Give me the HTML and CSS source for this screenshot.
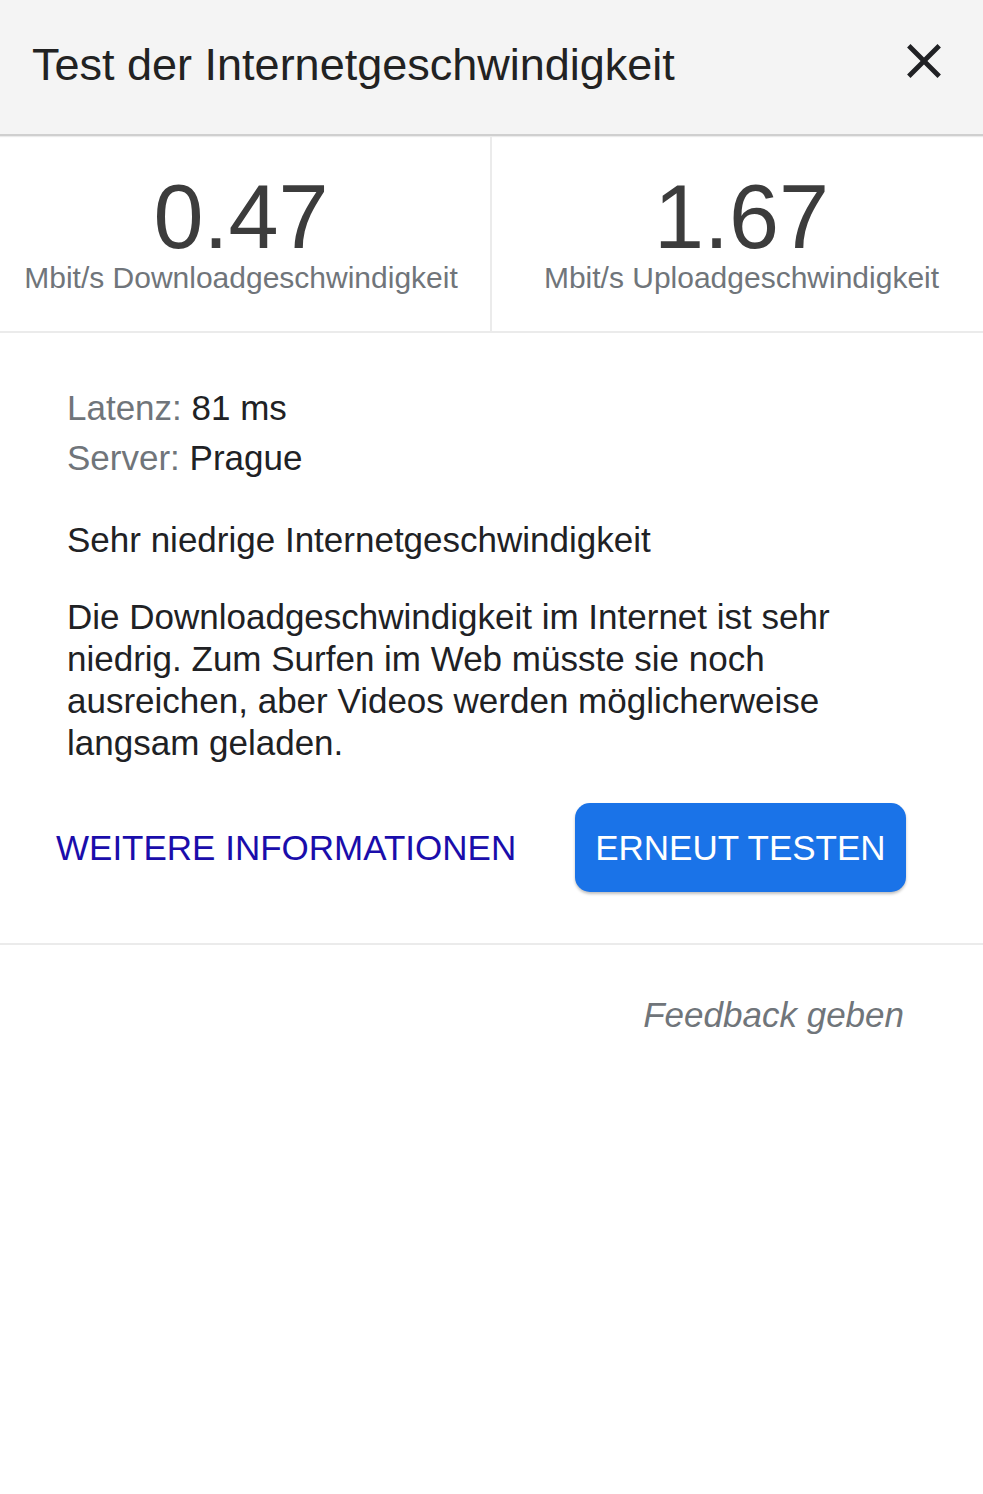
FILE: index.html
```html
<!DOCTYPE html>
<html lang="de">
<head>
<meta charset="utf-8">
<title>Test der Internetgeschwindigkeit</title>
<link rel="stylesheet" href="styles.css">
</head>
<body>
<div class="dialog">
  <header class="header">
    <h1 class="title">Test der Internetgeschwindigkeit</h1>
    <button class="close" aria-label="Schließen">
      <svg viewBox="0 0 24 24" width="58" height="58"><path d="M19 6.41L17.59 5 12 10.59 6.41 5 5 6.41 10.59 12 5 17.59 6.41 19 12 13.41 17.59 19 19 17.59 13.41 12z" fill="#202124"/></svg>
    </button>
  </header>
  <section class="stats">
    <div class="stat stat-down">
      <div class="stat-value">0.47</div>
      <div class="stat-label">Mbit/s Downloadgeschwindigkeit</div>
    </div>
    <div class="stat stat-up">
      <div class="stat-value">1.67</div>
      <div class="stat-label">Mbit/s Uploadgeschwindigkeit</div>
    </div>
  </section>
  <section class="details">
    <div class="meta"><span class="meta-key">Latenz:</span> 81 ms</div>
    <div class="meta"><span class="meta-key">Server:</span> Prague</div>
    <p class="verdict">Sehr niedrige Internetgeschwindigkeit</p>
    <p class="desc">Die Downloadgeschwindigkeit im Internet ist sehr niedrig. Zum Surfen im Web müsste sie noch ausreichen, aber Videos werden möglicherweise langsam geladen.</p>
    <div class="actions">
      <a class="more" href="#">WEITERE INFORMATIONEN</a>
      <button class="retry">ERNEUT TESTEN</button>
    </div>
  </section>
  <footer class="footer">
    <a class="feedback" href="#">Feedback geben</a>
  </footer>
</div>
</body>
</html>
```

FILE: styles.css
```css
html, body {
  margin: 0;
  padding: 0;
  background: #fff;
}
body {
  font-family: "Liberation Sans", Arial, sans-serif;
  color: #202124;
}
.header {
  height: 134px;
  background: #f4f4f4;
  border-bottom: 2px solid #cfcfcf;
  box-shadow: 0 1px 1px rgba(0,0,0,0.08);
  display: flex;
  align-items: flex-start;
  justify-content: space-between;
  box-sizing: content-box;
}
.title {
  margin: 0;
  padding: 39px 0 0 32px;
  font-size: 45px;
  line-height: 52px;
  font-weight: normal;
  color: #222;
}
.close {
  margin: 32px 30px 0 0;
  padding: 0;
  border: 0;
  background: none;
  width: 58px;
  height: 58px;
  display: flex;
}
.stats {
  display: flex;
  border-bottom: 2px solid #ebebeb;
}
.stat {
  flex: 0 0 auto;
  box-sizing: border-box;
  padding: 37px 0 36px;
  text-align: center;
}
.stat-down {
  width: 492px;
  padding-right: 8px;
  border-right: 2px solid #ebebeb;
}
.stat-up {
  width: 489px;
  padding-left: 10px;
}
.stat-value {
  font-size: 90px;
  line-height: 88px;
  color: #3c3c3c;
}
.stat-label {
  font-size: 30px;
  line-height: 34px;
  color: #70757a;
}
.details {
  padding: 50px 67px 51px;
  border-bottom: 2px solid #ebebeb;
  font-size: 35px;
}
.meta {
  line-height: 50px;
  color: #202124;
}
.meta-key {
  color: #70757a;
}
.verdict {
  margin: 36px 0 0;
  line-height: 42px;
}
.desc {
  margin: 35px 0 0;
  line-height: 42px;
}
.actions {
  display: flex;
  align-items: center;
  gap: 59px;
  margin: 39px 0 0 -11px;
}
.more {
  color: #1a0dab;
  text-decoration: none;
  font-size: 35px;
  line-height: 42px;
}
.retry {
  height: 89px;
  padding: 0 20px;
  border: 0;
  border-radius: 15px;
  background: #1a73e8;
  color: #fff;
  font-family: "Liberation Sans", Arial, sans-serif;
  font-size: 35px;
  box-shadow: 0 2px 3px rgba(0,0,0,0.25);
}
.footer {
  display: flex;
  justify-content: flex-end;
  padding: 49px 79px 0 0;
}
.feedback {
  font-size: 35px;
  line-height: 42px;
  font-style: italic;
  color: #70757a;
  text-decoration: none;
}
```
